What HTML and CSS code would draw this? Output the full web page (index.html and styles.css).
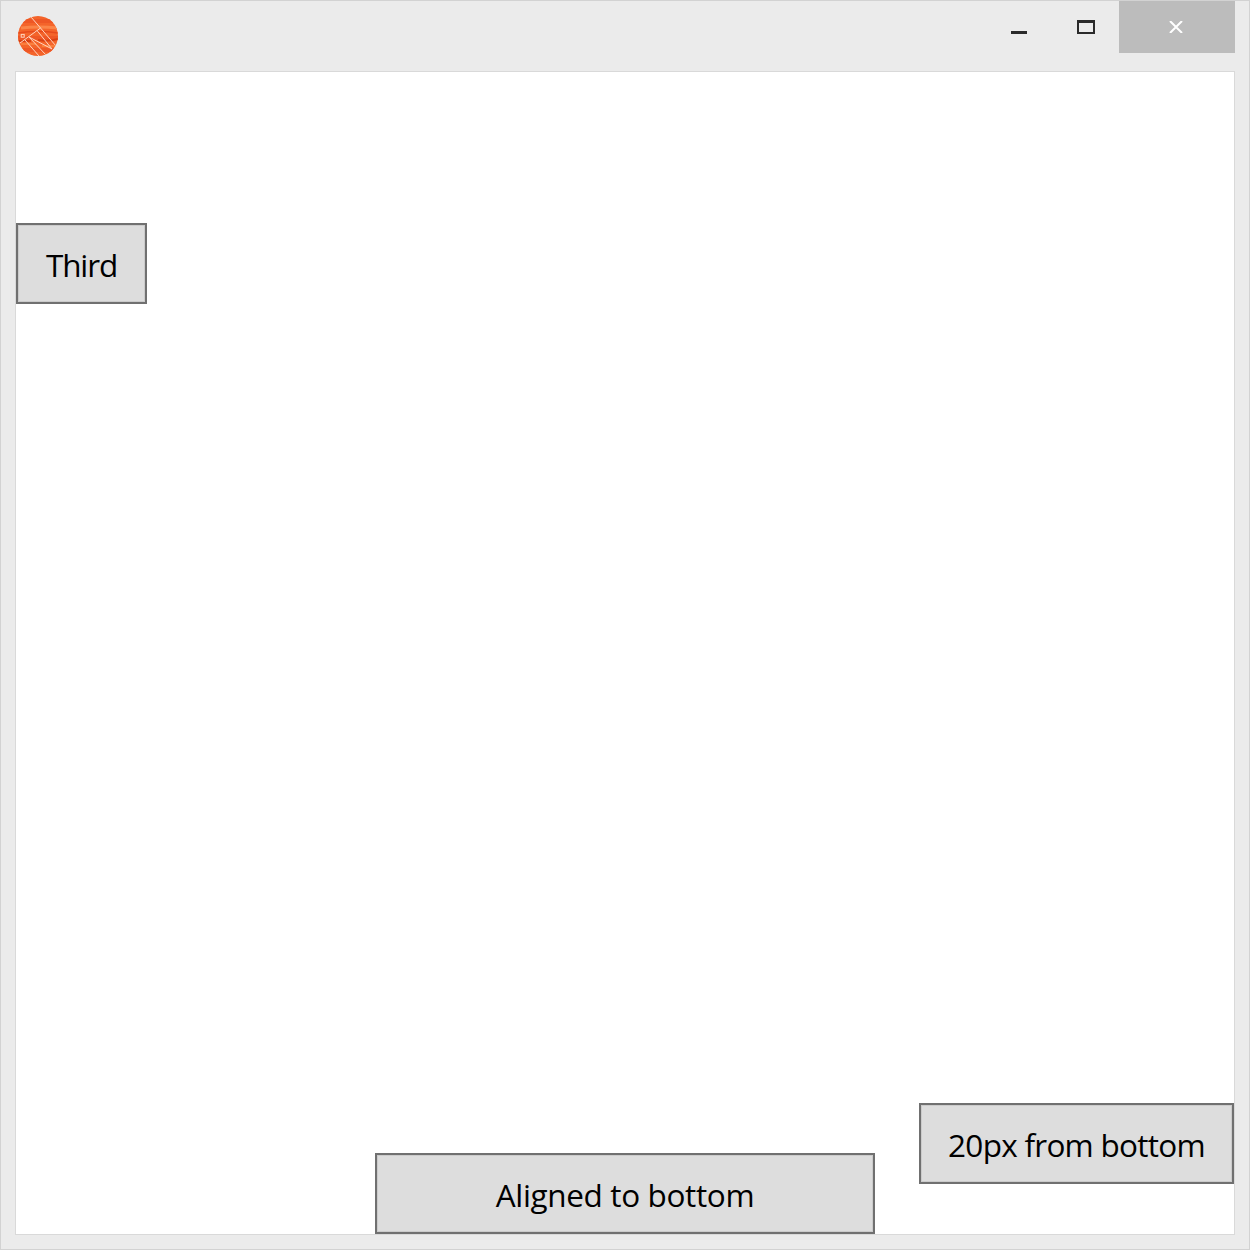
FILE: index.html
```html
<!DOCTYPE html>
<html lang="en">
<head>
<meta charset="utf-8">
<title>Window</title>
<link rel="stylesheet" href="styles.css">
</head>
<body>
<div class="window">
  <header class="titlebar">
    <svg class="logo" width="40" height="40" viewBox="0 0 40 40">
      <defs><clipPath id="disc"><circle cx="20" cy="20" r="20"/></clipPath></defs>
      <g clip-path="url(#disc)">
        <rect width="40" height="40" fill="#f4642a"/>
        <path d="M0 5H40M0 22H40M0 34H40" stroke="#ee5725" stroke-width="4"/>
        <path d="M3 12Q20 10 40 12" stroke="#fb8548" stroke-width="3" fill="none"/>
        <path d="M0 17Q20 14 40 17" stroke="#e64a1c" stroke-width="1.6" fill="none"/>
        <path d="M0 25H13M20 24Q30 26 40 23" stroke="#d94012" stroke-width="2" fill="none"/>
        <path d="M3 28H18M24 30H40" stroke="#fa7e3c" stroke-width="2"/>
        <g stroke="#ffd5c0" stroke-width="1" fill="none">
          <path d="M13 1L22.5 12L38 30M22.5 12L2 27M19 14.5L34 33M11 21L34 33M11 21L28 39M7 24L21 40"/>
          <rect x="3.2" y="18.4" width="3" height="2.8"/>
        </g>
      </g>
    </svg>
    <div class="controls">
      <svg class="minimize" width="16" height="3"><rect width="16" height="3" fill="#2a2a2a"/></svg>
      <span class="maximize"></span>
      <div class="close">
        <svg width="14" height="12" viewBox="0 0 14 12"><path d="M1 0L13 12M13 0L1 12" stroke="#fff" stroke-width="2"/></svg>
      </div>
    </div>
  </header>
  <main class="content">
    <button class="button third"><span>Third</span></button>
    <button class="button aligned"><span>Aligned to bottom</span></button>
    <button class="button raised"><span>20px from bottom</span></button>
  </main>
</div>
</body>
</html>
```
FILE: styles.css
```css
* { box-sizing: border-box; }
body { margin: 0; }
.window {
  display: flex;
  flex-direction: column;
  width: 1250px;
  height: 1250px;
  padding: 0 14px 14px;
  border: 1px solid #d2d2d2;
  background: #ebebeb;
}
.titlebar {
  display: flex;
  justify-content: space-between;
  height: 70px;
}
.logo { margin: 15px 0 0 2px; }
.controls { display: flex; align-items: flex-start; }
.logo { margin-left: 3px; }
.minimize { margin: 30px 50px 0 0; }
.maximize {
  width: 18px;
  height: 14px;
  margin: 19px 24px 0 0;
  border: 2px solid #2a2a2a;
  border-top-width: 3px;
}
.close {
  display: flex;
  justify-content: center;
  width: 116px;
  height: 52px;
  padding-top: 20px;
  padding-right: 2px;
  background: #bcbcbc;
}
.content {
  display: grid;
  grid-template-columns: 1fr 500px 1fr;
  flex: 1;
  border: 1px solid #d9d9d9;
  background: #fff;
}
.button {
  display: flex;
  align-items: center;
  justify-content: center;
  height: 81px;
  padding: 3px 0 0;
  border: 2px solid #707070;
  border-radius: 0;
  background: #ddd;
  box-shadow: inset 0 0 0 1px #cbcbcb;
  color: #000;
  font: 31.5px/44px "Open Sans", "Noto Sans", sans-serif;
  white-space: nowrap;
}
.third {
  width: 131px;
  margin-top: 151px;
  letter-spacing: -1.15px;
}
.aligned {
  align-self: end;
  letter-spacing: -0.36px;
}
.raised {
  align-self: end;
  justify-self: end;
  width: 315px;
  margin-bottom: 50px;
  letter-spacing: -0.73px;
}
```
